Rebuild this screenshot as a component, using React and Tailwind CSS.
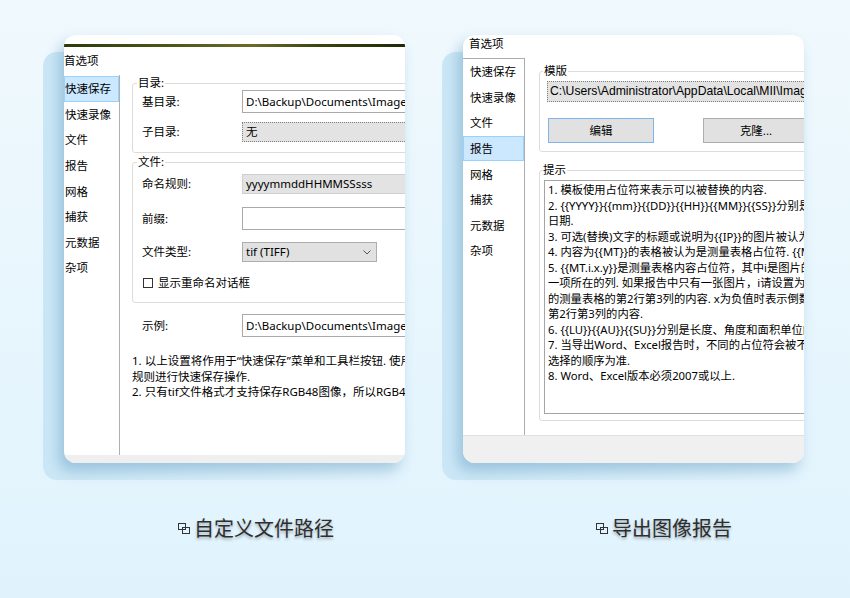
import React from 'react';

const FONT = "font-['Noto_Sans','Noto_Sans_CJK_SC',sans-serif]";

function CaptionIcon() {
  return (
    <svg width="12" height="11" viewBox="0 0 12 11" className="shrink-0">
      <rect x="0.5" y="0.5" width="7" height="6" fill="none" stroke="#333" strokeWidth="1" />
      <rect x="4.5" y="4.5" width="7" height="6" fill="none" stroke="#333" strokeWidth="1" />
    </svg>
  );
}

function Caption({ text, offset }) {
  return (
    <div className={`mt-[51px] flex items-center gap-[4px] h-[28px] ${offset}`}>
      <CaptionIcon />
      <span className="text-[20px] leading-[28px] text-[#2e2e2e] font-['Noto_Sans_CJK_SC',sans-serif] [text-shadow:0_2px_3px_rgba(0,0,0,0.3)]">
        {text}
      </span>
    </div>
  );
}

function Backing() {
  return (
    <div className="absolute left-[-21px] top-[17px] bottom-[-17px] right-[10px] rounded-[14px] bg-[linear-gradient(to_right,#cbe7f6,#e4f4fc)]" />
  );
}

const cardCls =
  'relative w-[341px] h-[428px] rounded-[12px] bg-white overflow-hidden flex flex-col text-black text-[11.5px] whitespace-nowrap shadow-[-5px_8px_14px_rgba(90,150,190,0.45)]';

function NavItem({ label, selected, pad }) {
  return (
    <div
      className={`h-[25.6px] flex items-center ${pad} ${
        selected ? 'bg-[#cce8ff] border border-[#99d1ff]' : 'border border-transparent'
      }`}
    >
      {label}
    </div>
  );
}

const navLabels = ['快速保存', '快速录像', '文件', '报告', '网格', '捕获', '元数据', '杂项'];

function Field({ children, grey, dotted, h }) {
  return (
    <div
      className={`flex-1 ${h} flex items-center pl-[3px] border ${
        grey ? 'bg-[#e3e3e3]' : 'bg-white'
      } ${dotted ? 'border-dotted border-[#7f7f7f]' : grey ? 'border-[#cfcfcf]' : 'border-[#a9a9a9]'}`}
    >
      {children}
    </div>
  );
}

function Row({ label, children, className }) {
  return (
    <div className={`flex items-center ${className}`}>
      <div className="w-[100px] shrink-0">{label}</div>
      {children}
    </div>
  );
}

function QuickSaveCard() {
  return (
    <div className={cardCls}>
      <div className="h-[9px] shrink-0" />
      <div className="h-[3px] shrink-0 bg-[linear-gradient(to_right,#2b3a0c,#4d5418_30%,#6b6a2a_55%,#3a4410_75%,#1e2a06)]" />
      <div className="mt-[7px] h-[14px] leading-[14px] shrink-0">首选项</div>
      <div className="mt-[7px] flex flex-1">
        <div className="w-[56px] shrink-0 border-r-[1.5px] border-[#b0b0b0] pt-[1px]">
          {navLabels.map((l, i) => (
            <NavItem key={l} label={l} selected={i === 0} pad="pl-0" />
          ))}
        </div>
        <div className="w-[520px] shrink-0 pl-[12px]">
          <fieldset className="mt-[1px] border border-[#dcdcdc] rounded-[3px] pb-[10px]">
            <legend className="ml-[4px] px-[1px] leading-[14px]">目录:</legend>
            <div className="pl-[9px]">
              <Row label="基目录:">
                <Field h="h-[23px]">D:\Backup\Documents\Image\</Field>
              </Row>
              <Row label="子目录:" className="mt-[9px]">
                <Field h="h-[20px]" grey dotted>无</Field>
              </Row>
            </div>
          </fieldset>
          <fieldset className="mt-[2px] border border-[#dcdcdc] rounded-[3px] pb-[13px]">
            <legend className="ml-[4px] px-[1px] leading-[14px]">文件:</legend>
            <div className="pl-[9px]">
              <Row label="命名规则:" className="mt-[5px]">
                <Field h="h-[20px]" grey>yyyymmddHHMMSSsss</Field>
              </Row>
              <Row label="前缀:" className="mt-[13px]">
                <Field h="h-[23px]" />
              </Row>
              <Row label="文件类型:" className="mt-[12px]">
                <div className="w-[135px] h-[20px] flex items-center justify-between pl-[3px] pr-[5px] bg-[#e1e1e1] border border-[#adadad]">
                  <span>tif (TIFF)</span>
                  <svg width="8" height="5" viewBox="0 0 8 5">
                    <path d="M0.5 0.5 L4 4 L7.5 0.5" fill="none" stroke="#555" strokeWidth="1" />
                  </svg>
                </div>
              </Row>
              <div className="mt-[14px] h-[13px] flex items-center pl-[1px]">
                <div className="w-[10px] h-[10px] border border-[#333] bg-white" />
                <span className="ml-[5px]">显示重命名对话框</span>
              </div>
            </div>
          </fieldset>
          <Row label="示例:" className="mt-[11px] pl-[10px]">
            <Field h="h-[23px]">D:\Backup\Documents\Image\</Field>
          </Row>
          <div className="mt-[16px] leading-[15.5px]">
            <div>1. 以上设置将作用于“快速保存”菜单和工具栏按钮. 使用此规则</div>
            <div>规则进行快速保存操作.</div>
            <div>2. 只有tif文件格式才支持保存RGB48图像，所以RGB48图像</div>
          </div>
        </div>
      </div>
      <div className="h-[8px] shrink-0 bg-[#efefef]" />
    </div>
  );
}

const tips = [
  '1. 模板使用占位符来表示可以被替换的内容.',
  '2. {{YYYY}}{{mm}}{{DD}}{{HH}}{{MM}}{{SS}}分别是年月日',
  '日期.',
  '3. 可选(替换)文字的标题或说明为{{IP}}的图片被认为是',
  '4. 内容为{{MT}}的表格被认为是测量表格占位符. {{MT}}',
  '5. {{MT.i.x.y}}是测量表格内容占位符，其中i是图片的序号',
  '一项所在的列. 如果报告中只有一张图片，i请设置为1',
  '的测量表格的第2行第3列的内容. x为负值时表示倒数',
  '第2行第3列的内容.',
  '6. {{LU}}{{AU}}{{SU}}分别是长度、角度和面积单位的',
  '7. 当导出Word、Excel报告时，不同的占位符会被不同',
  '选择的顺序为准.',
  '8. Word、Excel版本必须2007或以上.',
];

function ReportCard() {
  return (
    <div className={cardCls}>
      <div className="mt-[2px] h-[14px] leading-[14px] pl-[6px] shrink-0">首选项</div>
      <div className="mt-[7px] h-[377px] flex shrink-0">
        <div className="w-[62px] shrink-0 border-t border-r border-[#adadad]">
          {navLabels.map((l, i) => (
            <NavItem key={l} label={l} selected={i === 3} pad="pl-[6px]" />
          ))}
        </div>
        <div className="w-[420px] shrink-0 pl-[14px]">
          <fieldset className="mt-[6px] border border-[#dcdcdc] rounded-[3px] pb-[8px]">
            <legend className="ml-[3px] px-[1px] leading-[14px]">模版</legend>
            <div className="ml-[7px] mt-[3px] h-[21px] flex items-center pl-[2px] bg-[#e3e3e3] border border-dotted border-[#7f7f7f] font-['Liberation_Sans',sans-serif] text-[12.2px]">
              C:\Users\Administrator\AppData\Local\MII\Image\
            </div>
            <div className="ml-[8px] mt-[16px] flex gap-[49px]">
              <div className="w-[106px] h-[25px] flex items-center justify-center bg-[#e1e1e1] border border-[#7eb4ea]">编辑</div>
              <div className="w-[106px] h-[25px] flex items-center justify-center bg-[#e1e1e1] border border-[#adadad]">克隆...</div>
            </div>
          </fieldset>
          <fieldset className="mt-[11px] border border-[#dcdcdc] rounded-[3px] pb-[6px]">
            <legend className="ml-[2px] px-[1px] leading-[14px]">提示</legend>
            <div className="ml-[4px] mt-[3px] h-[234px] border-[1.5px] border-[#a5a5a5] bg-white pl-[3px] pt-[1px] leading-[15.5px] text-[11.3px]">
              {tips.map((t) => (
                <div key={t}>{t}</div>
              ))}
            </div>
          </fieldset>
        </div>
      </div>
      <div className="flex-1 border-t border-[#e0e0e0] bg-[#f0f0f0]" />
    </div>
  );
}

export default function App() {
  return (
    <div className={`w-[850px] h-[598px] overflow-hidden flex bg-[linear-gradient(to_bottom,#f0f9fd,#e0f3fd)] ${FONT}`}>
      <div className="w-[425px] shrink-0 flex flex-col">
        <div className="relative ml-[64px] mt-[35px] w-[341px]">
          <Backing />
          <QuickSaveCard />
        </div>
        <Caption text="自定义文件路径" offset="ml-[178px]" />
      </div>
      <div className="w-[425px] shrink-0 flex flex-col">
        <div className="relative ml-[38px] mt-[35px] w-[341px]">
          <Backing />
          <ReportCard />
        </div>
        <Caption text="导出图像报告" offset="ml-[171px]" />
      </div>
    </div>
  );
}
